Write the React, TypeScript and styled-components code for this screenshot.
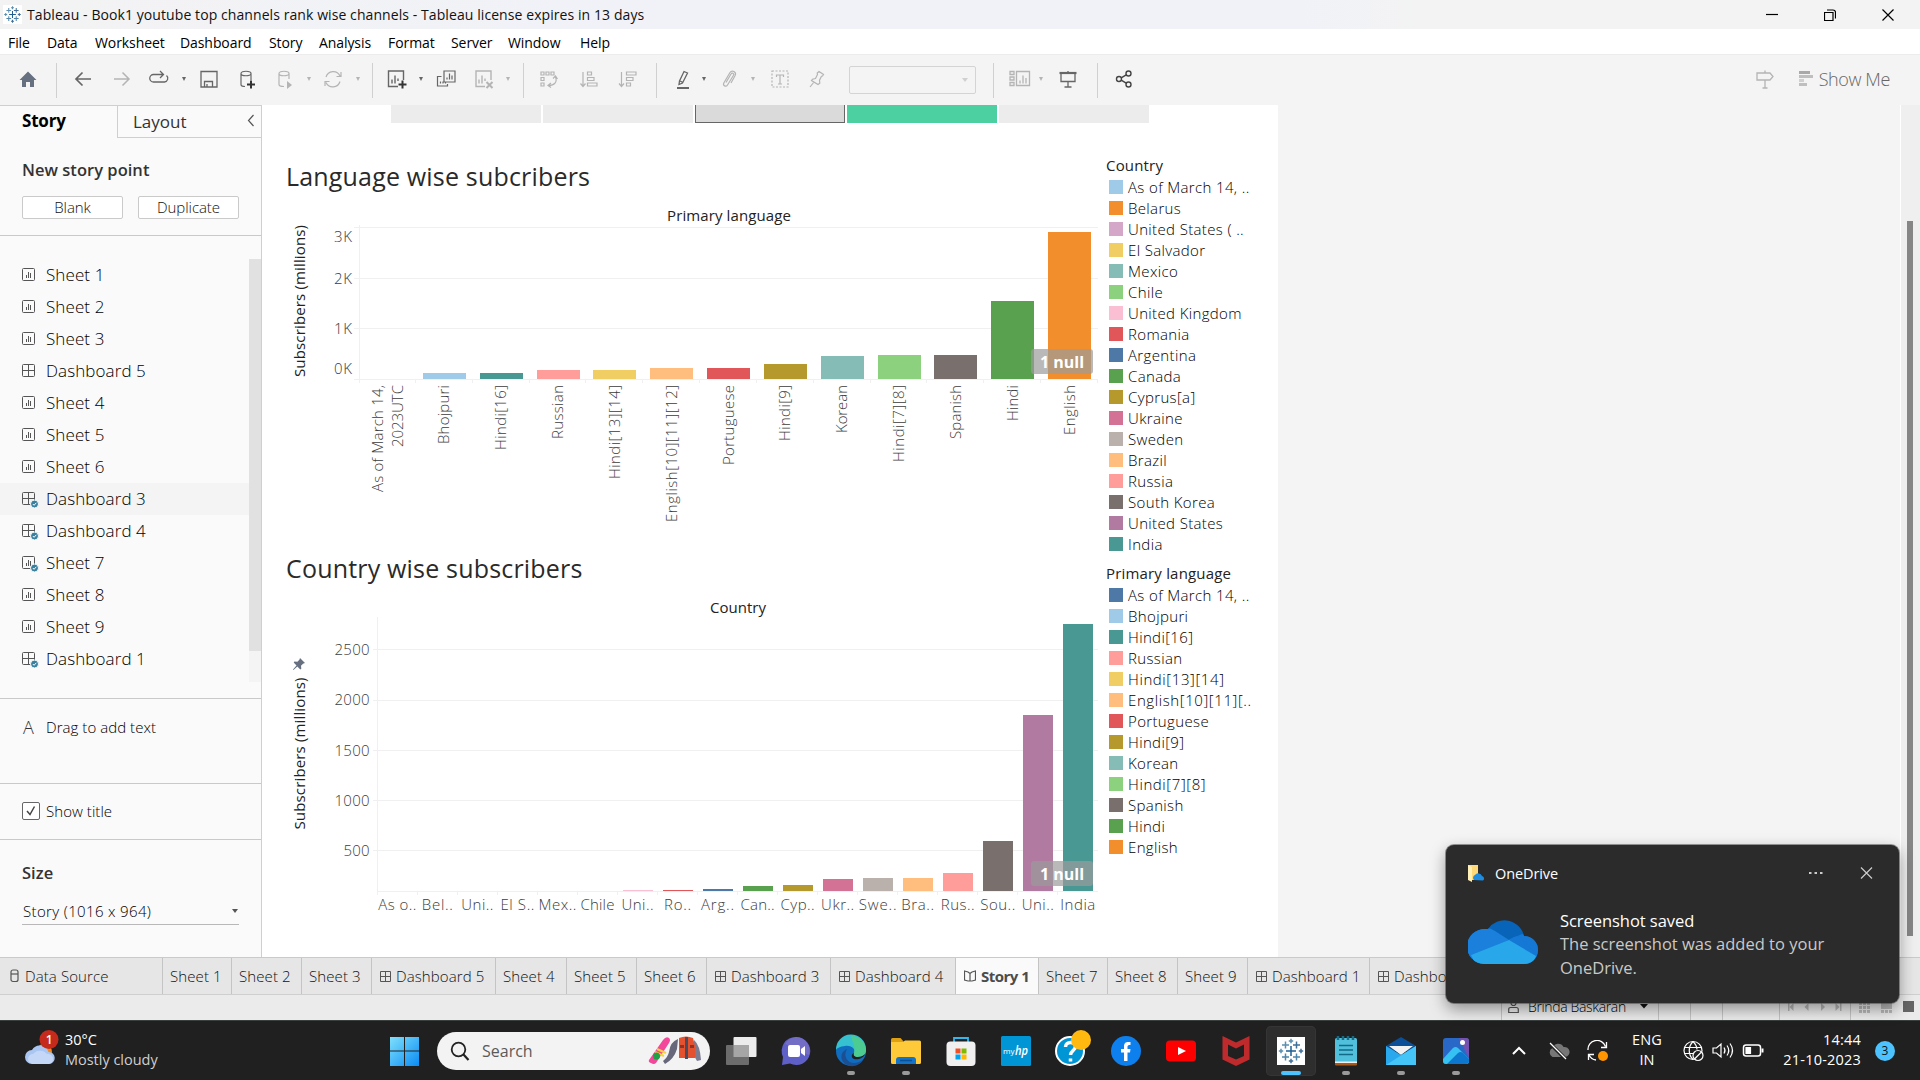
import React from "react";
import styled, { createGlobalStyle } from "styled-components";

const SANS = '"Open Sans", "Noto Sans", "Liberation Sans", sans-serif';

const Global = createGlobalStyle`
  * { box-sizing: border-box; }
  body { margin: 0; font-family: ${SANS}; overflow: hidden; background: #f4f4f4; }
`;

const Screen = styled.div`
  position: relative;
  width: 1920px;
  height: 1080px;
  display: flex;
  flex-direction: column;
  overflow: hidden;
  white-space: nowrap;
`;

/* ---------- title bar and menu ---------- */
const TitleBar = styled.header`
  height: 29px;
  display: flex;
  align-items: center;
  padding: 0 3px 0 3px;
  background: linear-gradient(90deg, #f3f3f3 0, #f0f2f8 640px, #f0f2f8 1290px, #f3f3f3 1420px);
  font-size: 14px;
  color: #111;
`;
const TitleText = styled.span`
  margin-left: 5px;
  letter-spacing: 0.08px;
  flex: 1;
`;
const WindowButton = styled.span`
  width: 58px;
  height: 29px;
  display: flex;
  align-items: center;
  justify-content: center;
`;
const MenuBar = styled.nav`
  height: 25px;
  display: flex;
  padding-left: 8px;
  background: #fff;
  font-size: 14px;
  letter-spacing: -0.08px;
  color: #000;
`;
const MenuItem = styled.span<{ $w: number }>`
  width: ${(p) => p.$w}px;
  line-height: 27px;
`;

/* ---------- toolbar ---------- */
const Toolbar = styled.div`
  height: 51px;
  display: flex;
  align-items: flex-start;
  padding: 15px 0 0;
  background: #f4f4f4;
  border-top: 1px solid #ececec;
`;
const Tool = styled.span<{ $gap: number; $dim?: boolean }>`
  flex: none;
  width: 20px;
  height: 20px;
  margin: -1px 0 0 ${(p) => p.$gap}px;
  color: ${(p) => (p.$dim ? "#b4b4b4" : "#666")};
  svg { display: block; overflow: visible; }
`;
const Caret = styled.span<{ $gap: number; $dim?: boolean }>`
  flex: none;
  width: 8px;
  height: 20px;
  margin: -1px 0 0 ${(p) => p.$gap}px;
  display: flex;
  align-items: center;
  justify-content: center;
  &::after {
    content: "";
    border: 2.5px solid transparent;
    border-top: 4px solid ${(p) => (p.$dim ? "#b4b4b4" : "#666")};
    border-bottom: 0;
  }
`;
const Rule = styled.span<{ $gap: number }>`
  flex: none;
  width: 1px;
  height: 35px;
  margin: -7px 0 0 ${(p) => p.$gap}px;
  background: #d0d0d0;
`;
const FitBox = styled.span`
  flex: none;
  width: 127px;
  height: 28px;
  margin: -4px 0 0 22px;
  border: 1px solid #d4d4d4;
  border-radius: 2px;
  display: flex;
  align-items: center;
  justify-content: flex-end;
  padding-right: 7px;
  &::after {
    content: "";
    border: 3.5px solid transparent;
    border-top: 4px solid #d0d0d0;
    border-bottom: 0;
  }
`;
const ShowMe = styled.span`
  display: flex;
  align-items: center;
  height: 20px;
  margin: -1px 30px 0 24px;
  gap: 6px;
  font-size: 18px;
  font-weight: 300;
  letter-spacing: -0.4px;
  color: #666;
`;
const Spacer = styled.span`flex: 1;`;

/* ---------- main area ---------- */
const Main = styled.main`
  height: 852px;
  display: flex;
`;
const Side = styled.aside`
  width: 262px;
  background: #fafafa;
  border-right: 1px solid #cfcfcf;
  display: flex;
  flex-direction: column;
  color: #333;
`;
const SideTabs = styled.div`
  height: 33px;
  display: flex;
  border-top: 1px solid #cfcfcf;
`;
const SideTab = styled.div<{ $active?: boolean }>`
  font-size: 17px;
  ${(p) =>
    p.$active
      ? "width:117px; padding-left:22px; font-weight:700; line-height:29px; color:#000; letter-spacing:-0.2px;"
      : "flex:1; padding: 0 6px 0 15px; border-left:1px solid #cfcfcf; border-bottom:1px solid #cfcfcf; line-height:32px; display:flex; justify-content:space-between;"}
`;
const NewPoint = styled.section`
  height: 98px;
  padding: 20px 22px 0;
  border-bottom: 1px solid #c9c9c9;
`;
const SideHeading = styled.div`
  font-size: 16.5px;
  font-weight: 600;
  line-height: 24px;
  letter-spacing: 0.03px;
`;
const ButtonRow = styled.div`
  display: flex;
  gap: 15px;
  margin-top: 14px;
`;
const SmallButton = styled.button`
  width: 101px;
  height: 23px;
  padding: 0 0 1px;
  border: 1px solid #cacaca;
  border-radius: 2px;
  background: #fff;
  color: #111;
  font: 300 15px/19px ${SANS};
  letter-spacing: -0.05px;
`;
const ListWrap = styled.section`
  height: 463px;
  padding-top: 23px;
  display: flex;
  border-bottom: 1px solid #c9c9c9;
`;
const List = styled.div`flex: 1;`;
const ListRow = styled.div<{ $hover: boolean }>`
  height: 32px;
  padding-left: 22px;
  display: flex;
  gap: 6px;
  font-size: 17px;
  line-height: 31px;
  font-weight: 300;
  letter-spacing: 0.09px;
  color: #000;
  background: ${(p) => (p.$hover ? "#f4f4f4" : "transparent")};
  svg { margin-top: 7px; }
`;
const ListTrack = styled.div`
  width: 12px;
  height: 423px;
  background: #f4f4f4;
  &::before { content: ""; display: block; height: 392px; background: #e1e1e1; }
`;
const SideRow = styled.section<{ $h: number; $pt: number }>`
  height: ${(p) => p.$h}px;
  padding: ${(p) => p.$pt}px 0 0 22px;
  border-bottom: 1px solid #c9c9c9;
  display: flex;
  align-items: flex-start;
  font-size: 15px;
  font-weight: 300;
  color: #000;
  line-height: 20px;
  letter-spacing: 0.05px;
`;
const Glyph = styled.span`
  width: 24px;
  padding-left: 1px;
  font-size: 18px;
  color: #333;
`;
const Check = styled.span`
  width: 18px;
  height: 18px;
  margin: 1px 6px 0 0;
  border: 1px solid #666;
  border-radius: 2px;
  background: #fff;
  svg { display: block; }
`;
const SizeBox = styled.section`
  flex: 1;
  padding: 21px 22px 0;
`;
const SizeSelect = styled.div`
  width: 217px;
  height: 28px;
  margin-top: 12px;
  padding: 1px 1px 0 1px;
  border-bottom: 1px solid #b8b8b8;
  display: flex;
  align-items: center;
  justify-content: space-between;
  font-size: 15px;
  font-weight: 300;
  color: #000;
  letter-spacing: 0.35px;
  &::after {
    content: "";
    border: 3.5px solid transparent;
    border-top: 4px solid #555;
    border-bottom: 0;
  }
`;

/* ---------- story canvas ---------- */
const Story = styled.div`
  width: 1016px;
  background: #fff;
`;
const NavStrip = styled.div`
  height: 18px;
  display: flex;
  gap: 2px;
  padding-left: 129px;
`;
const NavBox = styled.div<{ $bg: string; $line?: boolean }>`
  width: 150px;
  background: ${(p) => p.$bg};
  ${(p) => p.$line && "border: 1px solid #666; border-top: 0;"}
`;
const Dash = styled.div`display: flex;`;
const Charts = styled.div`
  width: 836px;
  padding-top: 34px;
`;
const ChartTitle = styled.h2`
  margin: 0;
  padding-left: 24px;
  height: 40px;
  font-size: 25px;
  letter-spacing: 0.18px;
  line-height: 38px;
  font-weight: 400;
  color: #2a2a2a;
`;
const ChartArea = styled.div`
  position: relative;
  svg { display: block; }
`;
const NullBadge = styled.span<{ $top: number }>`
  position: absolute;
  right: 5px;
  top: ${(p) => p.$top}px;
  width: 62px;
  height: 25px;
  border-radius: 3px;
  background: rgba(155, 155, 155, 0.7);
  color: #fff;
  font-size: 16px;
  font-weight: 700;
  line-height: 27px;
  text-align: center;
`;
const AxisText = styled.text`
  font-size: 15px;
  font-weight: 300;
  fill: #3c3c3c;
`;
const AxisTitle = styled.text`
  font-size: 15px;
  font-weight: 400;
  fill: #222;
`;
const Legends = styled.div`
  padding: 32px 0 0 8px;
  font-size: 15px;
  color: #222;
`;
const LegendTitle = styled.div<{ $mt?: number }>`
  margin-top: ${(p) => p.$mt || 0}px;
  line-height: 20px;
  height: 22px;
  letter-spacing: 0.18px;
`;
const LegendRow = styled.div<{ $c: string; $wide?: boolean }>`
  height: 21px;
  padding-left: 3px;
  display: flex;
  gap: 5px;
  line-height: 21px;
  font-weight: 300;
  letter-spacing: ${(p) => (p.$wide ? 0.6 : 0.36)}px;
  color: #000;
  &::before {
    content: "";
    width: 14px;
    height: 14px;
    margin-top: 3px;
    background: ${(p) => p.$c};
  }
`;
const Track = styled.div`
  width: 20px;
  margin-left: auto;
  padding: 116px 0 0 6px;
  background: #efefef;
  border-left: 1px solid #fff;
  &::before { content: ""; display: block; width: 6px; height: 715px; background: #868686; }
`;

/* ---------- sheet tabs and status ---------- */
const Tabs = styled.div`
  height: 38px;
  display: flex;
  background: #e6e6e6;
  border-top: 1px solid #cacaca;
  border-bottom: 1px solid #cfcfcf;
`;
const Tab = styled.div<{ $w: number; $active?: boolean; $icon?: boolean }>`
  flex: none;
  width: ${(p) => p.$w}px;
  padding-left: ${(p) => (p.$icon || p.$active ? 8 : 7)}px;
  display: flex;
  align-items: center;
  gap: 5px;
  border-right: 1px solid #c4c4c4;
  font-size: 15px;
  letter-spacing: ${(p) => (p.$active ? -0.5 : 0.1)}px;
  font-weight: ${(p) => (p.$active ? 700 : 300)};
  color: ${(p) => (p.$active ? "#4c4c4c" : "#111")};
  background: ${(p) => (p.$active ? "#fafafa" : "#e6e6e6")};
`;
const Status = styled.div`
  height: 25px;
  display: flex;
  justify-content: flex-end;
  background: #ebebeb;
  font-size: 14px;
  color: #000;
`;
const StatusCell = styled.div<{ $w: number }>`
  width: ${(p) => p.$w}px;
  border-left: 1px solid #c4c4c4;
  display: flex;
  align-items: center;
  padding: 0 0 2px 6px;
  svg { display: block; }
`;
const UserName = styled.span`
  width: 100px;
  margin: 0 12px 0 9px;
  font-weight: 300;
  letter-spacing: -0.35px;
`;

/* ---------- toast ---------- */
const Toast = styled.div`
  position: absolute;
  left: 1446px;
  top: 845px;
  width: 453px;
  height: 158px;
  padding: 0 26px 0 22px;
  border-radius: 8px;
  background: #2b2b2b;
  box-shadow: 0 0 0 1px rgba(60, 60, 60, 0.5), 0 6px 16px rgba(0, 0, 0, 0.4);
  color: #fff;
`;
const ToastHead = styled.div`
  height: 56px;
  display: flex;
  align-items: center;
  font-size: 14.5px;
  span { flex: 1; margin-left: 10px; letter-spacing: -0.1px; }
`;
const ToastBody = styled.div`
  display: flex;
  padding-top: 8px;
  font-size: 16.5px;
  line-height: 23.5px;
  color: #c9c9c9;
  b { display: block; height: 23px; font-weight: 400; color: #fff; letter-spacing: -0.05px; }
  svg { flex: none; margin: 10px 22px 0 0; }
`;

/* ---------- taskbar ---------- */
const Taskbar = styled.footer`
  height: 60px;
  display: flex;
  align-items: center;
  background: #202020;
  border-top: 1px solid #3a3f3f;
  color: #fff;
  font-size: 14.5px;
`;
const Weather = styled.div`
  width: 388px;
  padding-left: 22px;
  display: flex;
  align-items: center;
  gap: 6px;
  line-height: 20px;
  letter-spacing: -0.02px;
  div { margin-top: -2px; }
  p { margin: 0; color: #cfcfcf; }
`;
const SearchPill = styled.div`
  width: 273px;
  height: 38px;
  margin: 0 3px 0 17px;
  padding: 0 8px 0 13px;
  border-radius: 19px;
  background: #f3f3f3;
  display: flex;
  align-items: center;
  font-size: 16px;
  color: #5a5a5a;
  span { flex: 1; margin-left: 12px; letter-spacing: 0; }
`;
const AppSlot = styled.div`
  width: 55px;
  height: 50px;
  display: flex;
  justify-content: center;
`;
const AppTile = styled.div<{ $active?: boolean; $open?: boolean }>`
  width: 50px;
  height: 50px;
  display: flex;
  flex-direction: column;
  align-items: center;
  padding-top: 10px;
  gap: 5px;
  border-radius: 5px;
  background: ${(p) => (p.$active ? "#2e2e2e" : "transparent")};
  box-shadow: ${(p) => (p.$active ? "0 0 0 1px #353535 inset" : "none")};
  svg { flex: none; overflow: visible; }
  &::after {
    content: "";
    width: ${(p) => (p.$active ? 20 : 8)}px;
    height: 4px;
    border-radius: 2px;
    background: ${(p) => (p.$active ? "#4cc2ff" : p.$open ? "#9a9a9a" : "transparent")};
  }
`;
const Tray = styled.div`
  margin-left: auto;
  padding-right: 25px;
  display: flex;
  align-items: center;
  line-height: 20px;
  svg { flex: none; }
`;
const Chevron = styled.span`
  display: flex;
  margin-right: 5px;
`;
const TrayText = styled.div<{ $w: number; $right?: boolean }>`
  width: ${(p) => p.$w}px;
  margin-top: -2px;
  text-align: ${(p) => (p.$right ? "right" : "center")};
  letter-spacing: ${(p) => (p.$right ? 0.2 : 0.1)}px;
`;
const Count = styled.span`
  width: 20px;
  height: 20px;
  margin-left: 14px;
  border-radius: 50%;
  background: #4cc2ff;
  color: #111;
  font-size: 12px;
  line-height: 20px;
  text-align: center;
`;

/* ---------- icons ---------- */
const Svg = ({ s = 20, w, h, vb, children }: any) => (
  <svg
    width={w || s}
    height={h || s}
    viewBox={vb || `0 0 ${w || s} ${h || s}`}
    fill="none"
    stroke="currentColor"
    strokeWidth="1.2"
  >
    {children}
  </svg>
);

const toolIcons: Record<string, React.ReactNode> = {
  home: <path d="M10 2.500 18.500 11H16v7h-4v-5H8v5H4v-7H1.500z" fill="#667080" stroke="none" />,
  back: <path d="M18 10H3M9.500 3.500 3 10l6.500 6.500" strokeWidth="1.7" />,
  fwd: <path d="M2 10h15M10.500 3.500 17 10l-6.500 6.500" strokeWidth="1.5" />,
  redo: <path d="M9 5.500H4.500a3.700 3.700 0 0 0 0 7.500h11a3.700 3.700 0 0 0 2-6.500M8 5.500h6.500M11 2l3.500 3.500L11 9" strokeWidth="1.3" />,
  save: <path d="M2 2.500h16v15.500H2zM5.500 18v-5.500h8V18M8 18v-3" strokeWidth="1.3" />,
  dbAdd: (
    <>
      <path d="M3 4.500C3 1.500 13 1.500 13 4.500S3 7.500 3 4.500v11c0 1.300 2 2 4 2M13 4.500V11" />
      <path d="M13 11.500v8M9 15.500h8" stroke="#333" strokeWidth="2" />
    </>
  ),
  dbRun: (
    <>
      <path d="M4 4.500C4 1.500 14 1.500 14 4.500S4 7.500 4 4.500v11c0 1.300 2 2 5 2M14 4.500V10" />
      <path d="M12 12v8l5-4z" fill="currentColor" stroke="none" />
    </>
  ),
  refresh: <path d="M3 8a7.500 7.500 0 0 1 14-1M17 12.500a7.500 7.500 0 0 1-14 1M18 3v4.500h-4.500M2 17v-4.500h4.500" />,
  chartAdd: (
    <>
      <path d="M11 17.500H1.500V2h15v9M5 14.500v-4M8 14.500v-8M11 12V9.500" strokeWidth="1.4" />
      <path d="M15.500 11.500v8M11.500 15.500h8" stroke="#333" strokeWidth="2" />
    </>
  ),
  dup: <path d="M8 2h11v11H8zM11 10.500V8.500M13.500 10.500v-6M16 10.500V6.500M5.500 7.500h-4v9.500h10v-2M4.500 14.500v-2M7 14.500v-2M9.500 14.500v-1" />,
  chartX: (
    <>
      <path d="M11 17.500H2V2h15v9M5 14.500v-4M8 14.500v-8M11 12V9.500" strokeWidth="1.4" />
      <path d="m12.500 13 6 6M18.500 13l-6 6" strokeWidth="2" />
    </>
  ),
  swap: <path d="M2 3h3v3H2zM7 3h3v3H7zM12 3h3v3h-3zM2 8.500h3v3H2zM2 14h3v3H2zM16.500 8c2 5-1 8.500-7 8.500M14 9.500 16.500 7l2 3M12 14l-3 2.500 3 2" />,
  sortA: <path d="M4 3v14M1.500 14.500 4 17.500l2.500-3M8.500 3h4v3h-4zM8.500 8.500h6.500v3H8.500zM8.500 14h9.500v3H8.500z" />,
  sortD: <path d="M3.500 3v14M1 14.500l2.500 3 2.500-3M8.500 3H18v3H8.500zM8.500 8.500h6.500v3H8.500zM8.500 14h4v3h-4z" />,
  pen: (
    <>
      <path d="M11 2.500 14.500 4l-5 10-3.500 1.500L6.500 12zM7 12l3 1.500" strokeWidth="1.3" />
      <path d="M4 19h12" strokeWidth="2" />
    </>
  ),
  clip: <path d="M7 13.500 12 5c1-2 3.500-.5 2.500 1.300L8.500 16c-1.500 2.500-5 .5-3.700-2L11 3.500c2-3 7-.5 5 3.300L12 14" />,
  text: (
    <>
      <path d="M2 2h16v16H2z" strokeDasharray="2 1.5" />
      <path d="M6.500 8V6h7v2M10 6v9M8 15h4" />
    </>
  ),
  pin: <path d="m12 2.500 4.500 3-1 1.500-1 .2-2 4 .3 3L11 15.500 4.500 11.500l1-1.300 3-.7 2-4-.3-1.500zM7 13l-4 5" />,
  cards: <path d="M0 2.500h4v3H0zM0 8h4v3H0zM0 13.500h4v3H0zM6.500 2.500h13v14h-13zM10 14.500v-3M13 14.500v-8M16 14.500V9" strokeWidth="1.3" />,
  present: (
    <>
      <path d="M1.500 4h17" strokeWidth="2.2" />
      <path d="M3 4v8.500h14V4M10 12.500V18M6.500 18h7M10 2v2" strokeWidth="1.3" />
    </>
  ),
  share: (
    <g stroke="#444" strokeWidth="1.4">
      <circle cx="5" cy="10" r="2.500" />
      <circle cx="14.500" cy="4.500" r="2.500" />
      <circle cx="14.500" cy="15.500" r="2.500" />
      <path d="m7.200 8.800 5-3M7.200 11.200l5 3" />
    </g>
  ),
  sign: <path d="M2 4h13l3 3.500-3 3.500H2zM10 1.500V4M10 11v8M7.500 19h5" strokeWidth="1.3" />,
};

const T = ({ n, g, d }: { n: string; g: number; d?: boolean }) => (
  <Tool $gap={g} $dim={d}>
    <Svg>{toolIcons[n]}</Svg>
  </Tool>
);

const TableauMark = ({ s = 18 }: { s?: number }) => {
  const plus = (x: number, y: number, r: number, c: string) => (
    <path key={`${x}-${y}`} d={`M${x - r} ${y}h${2 * r}M${x} ${y - r}v${2 * r}`} stroke={c} />
  );
  return (
    <svg width={s} height={s} viewBox="0 0 28 28" strokeWidth="1.5">
      <path d="M0 0h28v28H0z" fill="#fff" />
      {plus(14, 14, 5, "#1f5f92")}
      {plus(8.5, 8, 3.5, "#5b8fb0")}
      {plus(19.5, 8, 3.5, "#3f6f98")}
      {plus(8.5, 20, 3.5, "#4d86ab")}
      {plus(19.5, 20, 3.5, "#4d86ab")}
      {plus(14, 4, 2.2, "#5a8fae")}
      {plus(14, 24, 2.2, "#3f6f98")}
      {plus(4, 14, 2.2, "#5a8fae")}
      {plus(24, 14, 2.2, "#3f6f98")}
    </svg>
  );
};

const SheetIcon = ({ kind, check }: { kind: "s" | "d"; check?: boolean }) => (
  <svg width="18" height="18" viewBox="0 0 18 18" fill="none" stroke="#555" strokeWidth="1">
    <rect x="0.5" y="2.5" width="12" height="12" rx="1" />
    {kind === "d" ? <path d="M6.500 2.500v12M.5 8.500h12" /> : <path d="M4.500 12V9M6.500 12V6M8.500 12V7" />}
    {check && (
      <>
        <circle cx="12.500" cy="14" r="4" fill="#3780a0" stroke="#fafafa" />
        <path d="m10.800 14 1.300 1.300 2.200-2.500" stroke="#fff" />
      </>
    )}
  </svg>
);

const GridIcon = () => (
  <svg width="11" height="11" viewBox="0 0 11 11" fill="none" stroke="#555">
    <path d="M.5.5h10v10H.5zM5.500.5v10M.5 5.500h10" />
  </svg>
);

const Cloud = ({ w = 70, h = 45 }: { w?: number; h?: number }) => (
  <svg width={w} height={h} viewBox="0 0 70 45">
    <defs>
      <clipPath id="cloudShape">
        <path d="M16 45a16 16 0 0 1 1-35h3a20 20 0 0 1 36 7 14 14 0 0 1 0 28z" />
      </clipPath>
    </defs>
    <g clipPath="url(#cloudShape)">
      <path d="M0 0h70v45H0z" fill="#0864b8" />
      <path d="M-2 9 18 9q5 0 9 3l14 9L0 42z" fill="#1a80dc" />
      <path d="m40 21 14-6 18 6v20z" fill="#1478d4" />
      <path d="m3 36 38-15q5-4 10-4l19 20-6 10H8z" fill="#1478d4" />
      <path d="m3 36 38-15 27 16-4 10H8z" fill="#28a8ea" />
    </g>
  </svg>
);

/* ---------- data ---------- */
const C = {
  blue: "#4e79a7", sky: "#a0cbe8", orange: "#f28e2b", peach: "#ffbe7d", green: "#59a14f",
  mint: "#8cd17d", olive: "#b6992d", gold: "#f1ce63", teal: "#499894", aqua: "#86bcb6",
  red: "#e15759", pink: "#ff9d9a", brown: "#79706e", taupe: "#bab0ac", rose: "#d37295",
  blush: "#fabfd2", purple: "#b07aa1", lilac: "#d4a6c8",
};

const menu: [string, number][] = [
  ["File", 39], ["Data", 48], ["Worksheet", 85], ["Dashboard", 89], ["Story", 50],
  ["Analysis", 69], ["Format", 63], ["Server", 57], ["Window", 72], ["Help", 50],
];

const points: [string, boolean][] = [
  ["Sheet 1", false], ["Sheet 2", false], ["Sheet 3", false], ["Dashboard 5", false],
  ["Sheet 4", false], ["Sheet 5", false], ["Sheet 6", false], ["Dashboard 3", true],
  ["Dashboard 4", true], ["Sheet 7", true], ["Sheet 8", false], ["Sheet 9", false], ["Dashboard 1", true],
];

/* label, bar colour, bar top, label length */
const languages: [string, string, number, number][] = [
  ["", "none", 379, 0], ["Bhojpuri", C.sky, 373, 59], ["Hindi[16]", C.teal, 373, 65],
  ["Russian", C.pink, 370, 54], ["Hindi[13][14]", C.gold, 370, 94],
  ["English[10][11][12]", C.peach, 368, 137], ["Portuguese", C.red, 368, 80],
  ["Hindi[9]", C.olive, 364, 56], ["Korean", C.aqua, 356, 48], ["Hindi[7][8]", C.mint, 355, 77],
  ["Spanish", C.brown, 355, 54], ["Hindi", C.green, 301, 36], ["English", C.orange, 232, 50],
];

const countries: [string, string, number, number][] = [
  ["As o..", "none", 891, 38], ["Bel..", "none", 891, 31], ["Uni..", "none", 891, 32],
  ["El S..", "none", 891, 34], ["Mex..", "none", 891, 38], ["Chile", "none", 891, 34],
  ["Uni..", C.blush, 890, 32], ["Ro..", C.red, 890, 27], ["Arg..", C.blue, 889, 33],
  ["Can..", C.green, 886, 34], ["Cyp..", C.olive, 885, 34], ["Ukr..", C.rose, 879, 33],
  ["Swe..", C.taupe, 878, 38], ["Bra..", C.peach, 878, 33], ["Rus..", C.pink, 873, 34],
  ["Sou..", C.brown, 841, 35], ["Uni..", C.purple, 715, 32], ["India", C.teal, 624, 35],
];

const countryLegend: [string, string][] = [
  ["As of March 14, ..", C.sky], ["Belarus", C.orange], ["United States ( ..", C.lilac],
  ["El Salvador", C.gold], ["Mexico", C.aqua], ["Chile", C.mint], ["United Kingdom", C.blush],
  ["Romania", C.red], ["Argentina", C.blue], ["Canada", C.green], ["Cyprus[a]", C.olive],
  ["Ukraine", C.rose], ["Sweden", C.taupe], ["Brazil", C.peach], ["Russia", C.pink],
  ["South Korea", C.brown], ["United States", C.purple], ["India", C.teal],
];

const languageLegend: [string, string][] = [
  ["As of March 14, ..", C.blue], ["Bhojpuri", C.sky], ["Hindi[16]", C.teal], ["Russian", C.pink],
  ["Hindi[13][14]", C.gold], ["English[10][11][..", C.peach], ["Portuguese", C.red],
  ["Hindi[9]", C.olive], ["Korean", C.aqua], ["Hindi[7][8]", C.mint], ["Spanish", C.brown],
  ["Hindi", C.green], ["English", C.orange],
];

const tabs: [string, number][] = [
  ["Sheet 1", 69], ["Sheet 2", 70], ["Sheet 3", 70], ["Dashboard 5", 124], ["Sheet 4", 71],
  ["Sheet 5", 70], ["Sheet 6", 70], ["Dashboard 3", 124], ["Dashboard 4", 125], ["Story 1", 83],
  ["Sheet 7", 69], ["Sheet 8", 70], ["Sheet 9", 70], ["Dashboard 1", 122], ["Dashboard 2", 124],
];

const Upright = ({ x, y, len, title, children }: any) => {
  const Tag: any = title ? AxisTitle : AxisText;
  return (
    <Tag transform={`translate(${x} ${y}) rotate(-90)`} textLength={len} textAnchor="end">
      {children}
    </Tag>
  );
};

const LanguageChart = () => {
  const step = 739 / 13;
  const ticks: [string, number][] = [["3K", 242], ["2K", 284], ["1K", 334], ["0K", 374]];
  return (
    <svg width="836" height="352" viewBox="262 197 836 352">
      <AxisTitle x="729" y="221" textAnchor="middle" textLength="124">Primary language</AxisTitle>
      <Upright x={305} y={225} len={152} title>Subscribers (millions)</Upright>
      <g shapeRendering="crispEdges" stroke="#f0f0f0">
        {[227.5, 278.5, 328.5, 379.5].map((y) => <path key={y} d={`M354 ${y}H1098`} />)}
        <path d="M359.500 225V383" />
        {languages.map((_, i) => <path key={i} d={`M${Math.round(359 + step * (i + 1)) - 0.5} 380v3`} />)}
      </g>
      {ticks.map(([t, y]) => (
        <AxisText key={t} x="352" y={y} textAnchor="end" textLength="18">{t}</AxisText>
      ))}
      {languages.map(([name, color, top], i) => (
        <rect key={name} x={Math.round(359 + step * i + 7)} y={top} width="43" height={379 - top} fill={color} shapeRendering="crispEdges" />
      ))}
      <Upright x={382.5} y={385} len={107}>As of March 14,</Upright>
      <Upright x={403} y={385} len={62}>2023UTC</Upright>
      {languages.slice(1).map(([name, , , len], i) => (
        <Upright key={name} x={Math.round(359 + step * (i + 1.5)) + 4.5} y={385} len={len}>{name}</Upright>
      ))}
    </svg>
  );
};

const CountryChart = () => {
  const step = 720.5 / 18;
  return (
    <svg width="836" height="368" viewBox="262 589 836 368">
      <AxisTitle x="738" y="613" textAnchor="middle" textLength="56">Country</AxisTitle>
      <path d="m300 658 5 5-1.500.5-.5.2-2 2 .3 3-1 .7-3-2.800L293.500 670l-.5-.5 3.500-4-2.800-3 .7-1 3 .3 2-2z" fill="#667080" />
      <Upright x={305} y={677.5} len={152} title>Subscribers (millions)</Upright>
      <g shapeRendering="crispEdges" stroke="#f0f0f0">
        {[649.5, 700.5, 750.5, 800.5, 850.5].map((y) => <path key={y} d={`M373 ${y}H1098`} />)}
        <path d="M377 891.500H1098M377.500 617V895" />
        {countries.map((_, i) => <path key={i} d={`M${Math.round(377 + step * (i + 1)) + 0.5} 892v3`} />)}
      </g>
      {[2500, 2000, 1500, 1000, 500].map((v, i) => (
        <AxisText key={v} x="369.5" y={655 + i * 50.3} textAnchor="end" textLength={v > 500 ? 35 : 26}>{v}</AxisText>
      ))}
      {countries.map(([name, color, top, len], i) => (
        <g key={i}>
          <rect x={Math.round(377.5 + step * i + 5)} y={top} width="30" height={891 - top} fill={color} shapeRendering="crispEdges" />
          <AxisText x={377.3 + step * (i + 0.5)} y="910" textAnchor="middle" textLength={len}>{name}</AxisText>
        </g>
      ))}
    </svg>
  );
};

const Legend = ({ title, items, mt }: { title: string; items: [string, string][]; mt?: number }) => (
  <>
    <LegendTitle $mt={mt}>{title}</LegendTitle>
    {items.map(([t, c]) => <LegendRow key={t} $c={c} $wide={t.includes("][")}>{t}</LegendRow>)}
  </>
);

const ArtText = styled.text<{ $italic?: boolean }>`
  font-family: ${SANS};
  font-style: ${(p) => (p.$italic ? "italic" : "normal")};
  fill: #fff;
  stroke: none;
`;

/* app name, whether it is running, its 30px artwork */
const apps: [string, boolean, React.ReactNode][] = [
  ["tasks", false, <><rect x="7.500" y="1" width="23" height="20" rx="1" fill="#ececec" /><rect x="0" y="9" width="23" height="20" rx="1" fill="#6c6c6c" /><path d="M7.500 9H23v12H7.500z" fill="#a6a6a6" /></>],
  ["chat", false, <><path d="M15 1a14 14 0 1 1-6 26.500L1 29l1-8A14 14 0 0 1 15 1z" fill="#5f5fc8" /><path d="M15 1a14 14 0 0 1 13 18L4 8a14 14 0 0 1 11-7z" fill="#8a7cc4" opacity=".5" /><rect x="7" y="9" width="12" height="12" rx="2" fill="#fff" /><path d="m20 13 4-3v10l-4-3z" fill="#fff" /></>],
  ["edge", true, <><circle cx="15" cy="15" r="15" fill="#0f6cbf" /><path d="M0 14A15 15 0 0 1 30 13c.5 5-3 8-8 8-4 0-5-2-4-4 2-5-4-8-9-7-5 .5-8 2-9 4z" fill="#35c1d0" /><path d="M15 0a15 15 0 0 1 15 13c.5 5-3 8-8 8-4 0-5-2-4-4 2-6-2-12-3-17z" fill="#56cf7c" opacity=".75" /><path d="M11 13c-5 8 2 17 12 13l4-2c-4 7-14 8-19 3-5-6-2-12 3-14z" fill="#1b4f92" /><path d="M18 17c-1 2 0 4 4 4 3 0 5-1 7-3-1 4-7 6-11 5-3-1-3-5 0-6z" fill="#202020" /></>],
  ["files", true, <><path d="M0 3.500q0-1.500 1.500-1.500h8l3.500 4H0z" fill="#dfa014" /><path d="M0 6h12l2-1.500h14.500Q30 4.500 30 6v20.500q0 1.500-1.500 1.500h-27Q0 28 0 26.500z" fill="#ffca3a" /><path d="M5 28v-4q0-3 3-3h14q3 0 3 3v4z" fill="#1273c8" /><path d="M9 24.500h12" stroke="#0b4f95" strokeWidth="1.5" /></>],
  ["store", false, <><path d="M8 6V2h14v4" stroke="#33b6ea" strokeWidth="1.8" fill="none" /><rect x=".5" y="5.500" width="29" height="24.500" rx="4" fill="#f0f0f0" /><path d="M9.500 12.500h5v5h-5z" fill="#f25022" /><path d="M15.500 12.500h5v5h-5z" fill="#7fba00" /><path d="M9.500 18.500h5v5h-5z" fill="#00a4ef" /><path d="M15.500 18.500h5v5h-5z" fill="#ffb900" /></>],
  ["myhp", false, <><rect width="30" height="30" rx="1.500" fill="#0096d6" /><ArtText x="2" y="18" fontSize="8" textLength="11.5" lengthAdjust="spacingAndGlyphs">my</ArtText><ArtText $italic x="14" y="18.500" fontSize="13" fontWeight="600" textLength="13" lengthAdjust="spacingAndGlyphs">hp</ArtText></>],
  ["help", false, <><circle cx="14" cy="15" r="14" fill="#0096d6" stroke="#fff" strokeWidth="2" /><path d="M9.500 11c0-6 10-6 10-.5 0 4-5 4-5 8.500M14.500 22.500v3" stroke="#fff" strokeWidth="3.5" fill="none" /><circle cx="25" cy="4" r="10" fill="#ffb90f" /></>],
  ["facebook", false, <><circle cx="15" cy="15" r="15" fill="#0d80ee" /><path d="M13 25V16.500h-3V13h3v-2.500c0-4 2-5 6.500-4.500v3c-2.500 0-3 .5-3 2v2h3l-.5 3.500h-2.500V25z" fill="#fff" /></>],
  ["youtube", false, <><rect y="4.500" width="30" height="21" rx="4" fill="#f00" /><path d="m12 11 8 4-8 4z" fill="#fff" /></>],
  ["mcafee", false, <path d="M1.500 0 15 6.500 28.500 0v23.500L15 30 1.500 23.500zM7 8.500v11.500l8 3.500 8-3.500V8.500l-8 4z" fill="#bf2a2c" fillRule="evenodd" />],
  ["tableau", true, <g transform="translate(1 1)"><TableauMark s={28} /></g>],
  ["notes", true, <><rect x="4" y="2" width="22" height="26" rx="1.500" fill="#50c0dc" /><path d="M4 26h22v2.500q0 1-1 1H5q-1 0-1-1z" fill="#a8581c" /><path d="M4 25.500h22v1.500H4z" fill="#eee" /><path d="M8 9.500h14M8 14h14M8 18.500h14" stroke="#136a86" strokeWidth="1.7" /><path d="M7 0v4M12 0v4M17 0v4M22 0v4" stroke="#1d6a85" strokeWidth="2.5" /></>],
  ["mail", true, <><path d="M0 10 15 1l15 9v5H0z" fill="#0a4f97" /><path d="M3 10h24l-12 9z" fill="#f2f2f2" /><path d="M0 10v19h30V10L15 19z" fill="#2aa8ee" /><path d="m30 10-30 19h30z" fill="#45c4f8" /></>],
  ["photos", true, <><rect x="2" y="2" width="26" height="26" rx="3" fill="#2a68c8" /><path d="M18 2h7q3 0 3 3v17z" fill="#7551b0" /><path d="M2 23 12 12q2.500-2 5 0l11 11v2q0 3-3 3H5q-3 0-3-3z" fill="#35c2f2" /><path d="M6 28 17 17q2.500-2 5 0l6 6v2q0 3-3 3z" fill="#0d76ce" /><circle cx="21.500" cy="6.500" r="2.500" fill="#fff" /></>],
];

export default function App() {
  return (
    <Screen>
      <Global />
      <TitleBar>
        <TableauMark s={19} />
        <TitleText>Tableau - Book1 youtube top channels rank wise channels - Tableau license expires in 13 days</TitleText>
        <WindowButton><Svg s={12}><path d="M0 5.500h12" stroke="#000" /></Svg></WindowButton>
        <WindowButton><Svg s={12}><path d="M.5 3.500h8.500v8H.5zM3 1h6q2.500 0 2.500 2.500V9.500" stroke="#000" /></Svg></WindowButton>
        <WindowButton><Svg s={12}><path d="m.5.5 11 11M11.500.5l-11 11" stroke="#000" /></Svg></WindowButton>
      </TitleBar>
      <MenuBar>{menu.map(([t, w]) => <MenuItem key={t} $w={w}>{t}</MenuItem>)}</MenuBar>
      <Toolbar>
        <T n="home" g={18} /><Rule $gap={18} />
        <T n="back" g={16} /><T n="fwd" g={19} d /><T n="redo" g={17} /><Caret $gap={11} />
        <T n="save" g={11} /><T n="dbAdd" g={19} /><T n="dbRun" g={17} d /><Caret $gap={10} $dim />
        <T n="refresh" g={10} d /><Caret $gap={11} $dim /><Rule $gap={10} />
        <T n="chartAdd" g={14} /><Caret $gap={10} /><T n="dup" g={11} /><T n="chartX" g={18} d /><Caret $gap={10} $dim />
        <Rule $gap={11} />
        <T n="swap" g={15} d /><T n="sortA" g={20} d /><T n="sortD" g={19} d /><Rule $gap={18} />
        <T n="pen" g={16} /><Caret $gap={7} /><T n="clip" g={11} d /><Caret $gap={10} $dim />
        <T n="text" g={13} d /><T n="pin" g={17} d /><FitBox /><Rule $gap={17} />
        <T n="cards" g={16} d /><Caret $gap={7} $dim /><T n="present" g={13} /><Rule $gap={19} />
        <T n="share" g={16} />
        <Spacer />
        <T n="sign" g={0} d />
        <ShowMe>
          <Svg w={14} h={16}><path d="M0 0h11v3H0z" fill="#a9a9a9" stroke="none" /><path d="M0 4h14v3H0zM0 12h8v3H0z" fill="#bfbfbf" stroke="none" /><path d="M0 8h5v3H0z" fill="#d0d0d0" stroke="none" /></Svg>
          Show Me
        </ShowMe>
      </Toolbar>

      <Main>
        <Side>
          <SideTabs>
            <SideTab $active>Story</SideTab>
            <SideTab>
              Layout
              <Svg w={8} h={30}><path d="m6.500 9-5 5.500 5 5.500" stroke="#555" /></Svg>
            </SideTab>
          </SideTabs>
          <NewPoint>
            <SideHeading>New story point</SideHeading>
            <ButtonRow><SmallButton>Blank</SmallButton><SmallButton>Duplicate</SmallButton></ButtonRow>
          </NewPoint>
          <ListWrap>
            <List>
              {points.map(([t, used]) => (
                <ListRow key={t} $hover={t === "Dashboard 3"}>
                  <SheetIcon kind={t[0] === "D" ? "d" : "s"} check={used} />
                  {t}
                </ListRow>
              ))}
            </List>
            <ListTrack />
          </ListWrap>
          <SideRow $h={85} $pt={18}><Glyph>A</Glyph>Drag to add text</SideRow>
          <SideRow $h={56} $pt={17}>
            <Check><Svg s={16}><path d="m4 8 3 3.500 4.500-8" stroke="#444" strokeWidth="1.5" /></Svg></Check>
            Show title
          </SideRow>
          <SizeBox>
            <SideHeading>Size</SideHeading>
            <SizeSelect>Story (1016 x 964)</SizeSelect>
          </SizeBox>
        </Side>

        <Story>
          <NavStrip>
            <NavBox $bg="#ececec" /><NavBox $bg="#ececec" /><NavBox $bg="#dadada" $line />
            <NavBox $bg="#4dd0a1" /><NavBox $bg="#ececec" />
          </NavStrip>
          <Dash>
            <Charts>
              <ChartTitle>Language wise subcribers</ChartTitle>
              <ChartArea><LanguageChart /><NullBadge $top={152}>1 null</NullBadge></ChartArea>
              <ChartTitle>Country wise subscribers</ChartTitle>
              <ChartArea><CountryChart /><NullBadge $top={272}>1 null</NullBadge></ChartArea>
            </Charts>
            <Legends>
              <Legend title="Country" items={countryLegend} />
              <Legend title="Primary language" items={languageLegend} mt={8} />
            </Legends>
          </Dash>
        </Story>
        <Track />
      </Main>

      <Tabs>
        <Tab $w={163} $icon>
          <Svg w={12} h={14}><rect x="3" y="1" width="7" height="11.500" rx="2" stroke="#555" /><path d="M3 5h7" stroke="#555" /></Svg>
          Data Source
        </Tab>
        {tabs.map(([t, w]) => (
          <Tab key={t} $w={w} $active={t === "Story 1"} $icon={t[0] === "D"}>
            {t[0] === "D" && <GridIcon />}
            {t === "Story 1" && <Svg w={12} h={12}><path d="M.5 1 4 2l2 1.500L8 2l3.500-1v9L8 11H4L.5 10zM6 3.500V11" stroke="#555" /></Svg>}
            {t}
          </Tab>
        ))}
      </Tabs>
      <Status>
        <StatusCell $w={157}>
          <Svg w={11} h={15}><circle cx="5.500" cy="4" r="2.500" stroke="#555" /><path d="M.7 13.500v-3q0-2 2-2h5.600q2 0 2 2v3z" stroke="#555" /></Svg>
          <UserName>Brinda Baskaran</UserName>
          <Svg w={9} h={5}><path d="M0 0h8L4 4.500z" fill="#111" stroke="none" /></Svg>
        </StatusCell>
        <StatusCell $w={32} /><StatusCell $w={32} /><StatusCell $w={57} />
        <StatusCell $w={71}>
          <Svg w={60} h={8}><path d="M2 0h1.500v8H2zM7.500 0v8l-4-4zM22.500 0v8l-4-4zM35 0v8l4-4zM49.500 0v8l4-4zM54 0h1.500v8H54z" fill="#b5b5b5" stroke="none" /></Svg>
        </StatusCell>
        <StatusCell $w={70}>
          <Svg w={60} h={12}>
            <path d="M2 1h3v3H2zM6 1h3v3H6zM10 1h3v3h-3zM2 5h3v3H2zM6 5h3v3H6zM10 5h3v3h-3zM2 9h3v3H2zM6 9h3v3H6zM10 9h3v3h-3zM24 1h11v7H24zM24 9h3v3h-3zM28 9h3v3h-3zM32 9h3v3h-3z" fill="#b9b9b9" stroke="none" />
            <path d="M46 0h11v11H46z" fill="#666" stroke="none" />
          </Svg>
        </StatusCell>
      </Status>

      <Taskbar>
        <Weather>
          <svg width="37" height="44" viewBox="0 -4 37 44">
            <circle cx="22" cy="19" r="8" fill="#f28a1c" />
            <path d="M10 31a7 7 0 0 1 0-14 9 9 0 0 1 16.500 2A6 6 0 0 1 27 31z" fill="#a9c6f2" />
            <path d="M11 31a5 5 0 0 1 0-10 9 9 0 0 1 14 0 5 5 0 0 1 2 10z" fill="#d0def8" opacity=".7" />
            <circle cx="27" cy="6.500" r="9.500" fill="#c42b1c" />
            <ArtText x="23.700" y="11" fontSize="12" fontWeight="600">1</ArtText>
          </svg>
          <div>30°C<p>Mostly cloudy</p></div>
        </Weather>
        <svg width="32" height="30" viewBox="0 0 32 30">
          <defs><linearGradient id="win" x2="1" y2="1"><stop stopColor="#7fe0fb" /><stop offset="1" stopColor="#0a8cf5" /></linearGradient></defs>
          <path d="M2 1h14v13.500H2zM17 1h14v13.500H17zM2 15.500h14V30H2zM17 15.500h14V30H17z" fill="url(#win)" />
        </svg>
        <SearchPill>
          <Svg><circle cx="8.500" cy="8.500" r="6.800" stroke="#222" strokeWidth="1.8" /><path d="m13.500 13.500 5 5.500" stroke="#222" strokeWidth="2.2" /></Svg>
          <span>Search</span>
          <svg width="54" height="30" viewBox="0 0 54 30">
            <path d="M1 24 15 4q3-4 6-2 2 2 0 5L8 27q-2 2-5 0-3-1-2-3z" fill="#f2479b" />
            <path d="m9 13 9 4M7 16l9 4" stroke="#f5d53a" strokeWidth="2" />
            <circle cx="8.500" cy="20" r="3.500" fill="#21a048" />
            <path d="M30 3q-8 3-9 13-1 5-6 9l2 3q9-5 12-15z" fill="#66677a" />
            <path d="M46 4q6 5 7 20l-4 1-5-9z" fill="#7b7c90" />
            <path d="M31 2q7-3 14 0l2 8v12h-7V10v12h-9z" fill="#e4512f" />
            <path d="M37 1h3v22h-3z" fill="#4a4b5e" />
            <path d="M32 9h4v3h-4zM42 9h4v3h-4z" fill="#8f3324" />
          </svg>
        </SearchPill>
        {apps.map(([name, open, art]) => (
          <AppSlot key={name}>
            <AppTile $active={name === "tableau"} $open={open}>
              <svg width="30" height="30" viewBox="0 0 30 30">{art}</svg>
            </AppTile>
          </AppSlot>
        ))}
        <Tray>
          <Chevron><Svg w={14} h={9}><path d="m1 8 6-6 6 6" strokeWidth="2" /></Svg></Chevron>
          <Svg w={80} h={22} vb="1.500 0 80 22">
            <path d="M23 17a5 5 0 0 1 0-9 6 6 0 0 1 11-1 5 5 0 0 1 2 10z" fill="#777" stroke="none" />
            <path d="m20 3 16 16" stroke="#202020" strokeWidth="3.5" /><path d="m20.500 3 16 16" strokeWidth="1.3" />
            <path d="M58.500 10A9 9 0 0 1 76 6.500M77 2v5.500h-5.500M59 20v-5.500h5.500M59.500 15a9 9 0 0 0 7 5" strokeWidth="1.3" />
            <circle cx="73.500" cy="16" r="5" fill="#ff9500" stroke="none" />
          </Svg>
          <TrayText $w={72}>ENG<br />IN</TrayText>
          <Svg w={82} h={22} vb="1 0.500 82 22">
            <circle cx="11" cy="11" r="9" /><path d="M2 8h18M2 14h9M11 2c-5 5-5 13 0 18M11 2c3 3 4 5 4 8" />
            <circle cx="16" cy="16" r="5" fill="#202020" /><path d="m12.500 19.500 7-7" />
            <path d="M31 8.500h3.500l4.500-4v13l-4.500-4H31zM42 8q2 3 0 6M45 6q3.500 5 0 10M48 4q5 7 0 14" />
            <rect x="61.500" y="5.500" width="17" height="11" rx="2.500" strokeWidth="1.5" /><path d="M64 8h4.500v6H64z" fill="#fff" /><path d="M80.500 9v4" strokeWidth="2" />
          </Svg>
          <TrayText $w={96} $right>14:44<br />21-10-2023</TrayText>
          <Count>3</Count>
        </Tray>
      </Taskbar>

      <Toast>
        <ToastHead>
          <svg width="17" height="18" viewBox="0 0 17 18">
            <path d="M0 1h10v15H2z" fill="#ffd977" /><path d="M0 1l4 2v15l-4-2z" fill="#fff0b8" />
            <path d="M6 16a3 3 0 0 1 1-5 4 4 0 0 1 7 1 2.500 2.500 0 0 1 1 4.500z" fill="#1f8ce0" />
          </svg>
          <span>OneDrive</span>
          <Svg w={14} h={4}><path d="M0 1h2.500v2H0zM5.500 1H8v2H5.500zM11 1h2.500v2H11z" fill="#ccc" stroke="none" /></Svg>
          <Svg w={50} h={12}><path d="m38 .5 11 11M49 .5l-11 11" stroke="#ccc" /></Svg>
        </ToastHead>
        <ToastBody>
          <Cloud />
          <div><b>Screenshot saved</b>The screenshot was added to your<br />OneDrive.</div>
        </ToastBody>
      </Toast>
    </Screen>
  );
}
